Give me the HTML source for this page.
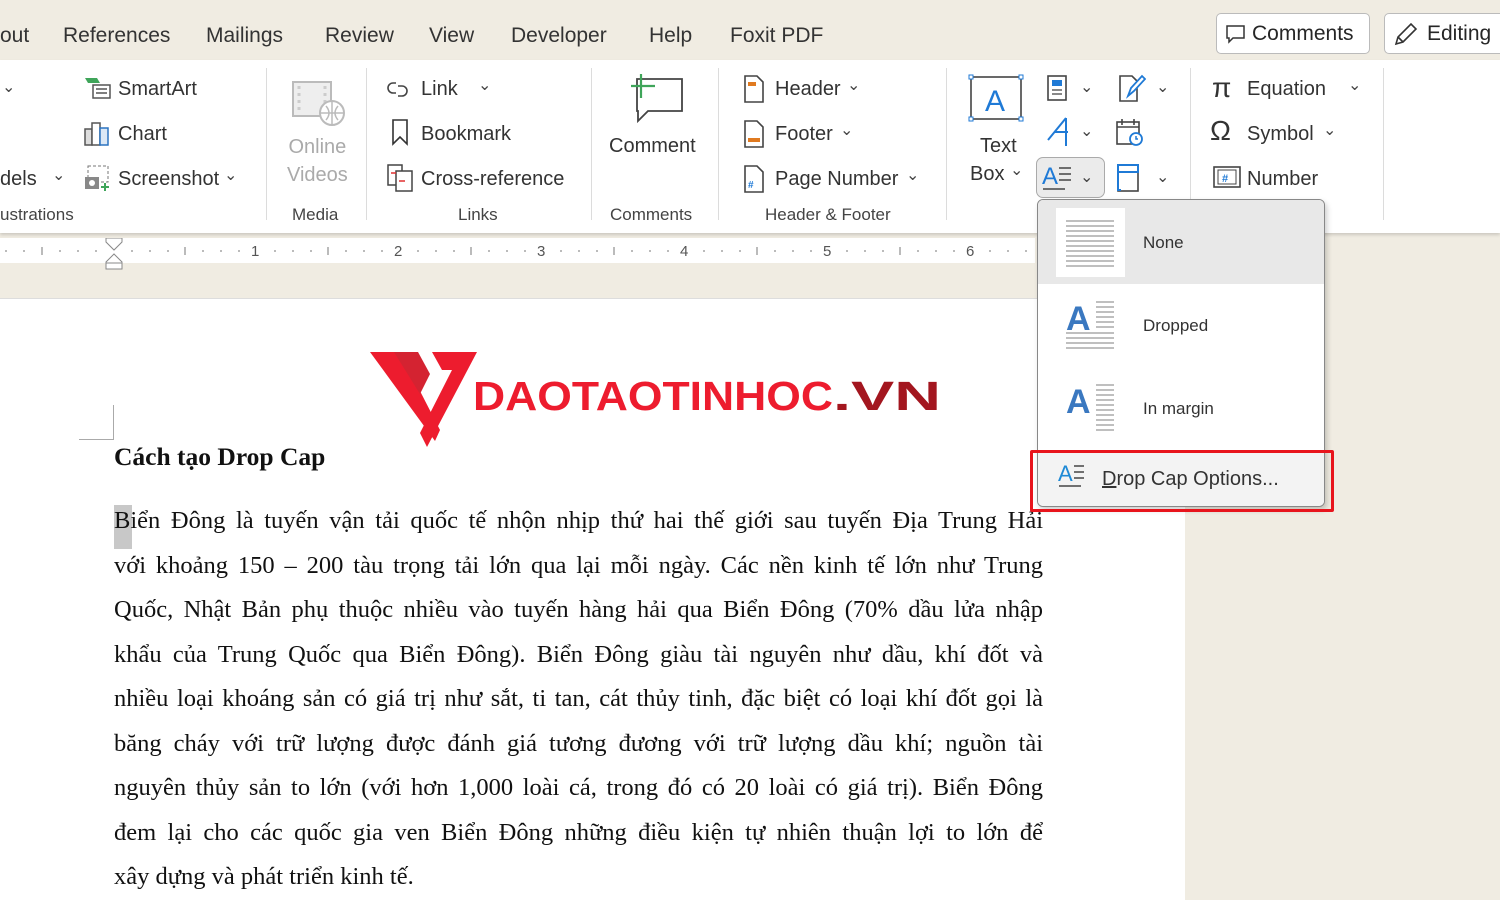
<!DOCTYPE html>
<html><head><meta charset="utf-8"><style>
*{margin:0;padding:0;box-sizing:border-box}
body{width:1500px;height:900px;overflow:hidden;position:relative;background:#f0ece2;font-family:"Liberation Sans",sans-serif;color:#262626}
.a{position:absolute;white-space:nowrap}
.tab{top:24px;font-size:21px;color:#333}
.rb{font-size:20px;color:#333;margin-top:2px}
.grp{font-size:17px;color:#444;top:205px}
.sep{position:absolute;top:68px;width:1px;height:152px;background:#dcdcdc}
.chev{font-size:16px;color:#444;margin-top:1px}
.doc{font-family:"Liberation Serif",serif;font-size:24.5px;color:#111}
.p{position:absolute;left:114px;width:929px;text-align:justify;text-align-last:justify;white-space:nowrap}
</style></head><body>
<div class="a tab" style="left:0">out</div>
<div class="a tab" style="left:63px">References</div>
<div class="a tab" style="left:206px">Mailings</div>
<div class="a tab" style="left:325px">Review</div>
<div class="a tab" style="left:429px">View</div>
<div class="a tab" style="left:511px">Developer</div>
<div class="a tab" style="left:649px">Help</div>
<div class="a tab" style="left:730px">Foxit PDF</div>
<div class="a" style="left:1216px;top:13px;width:154px;height:41px;border:1px solid #bbb;border-radius:5px;background:#fff;font-size:21px;padding:8px 0 0 35px">Comments</div>
<svg class="a" style="left:1225px;top:24px" width="22" height="22"><path d="M2 2h17v12H8l-4 4v-4H2z" fill="none" stroke="#333" stroke-width="1.5"/></svg>
<div class="a" style="left:1384px;top:13px;width:130px;height:41px;border:1px solid #bbb;border-radius:5px;background:#fff;font-size:21px;padding:8px 0 0 42px">Editing</div>
<svg class="a" style="left:1392px;top:20px" width="28" height="28"><path d="M4 24l2-7L19 4l5 5L11 22z M6 17l5 5" fill="none" stroke="#333" stroke-width="1.6"/></svg>
<div class="a" style="left:0;top:60px;width:1500px;height:173px;background:#fff;box-shadow:0 2px 3px rgba(0,0,0,.15)"></div>
<div class="sep" style="left:266px"></div><div class="sep" style="left:366px"></div><div class="sep" style="left:591px"></div><div class="sep" style="left:718px"></div><div class="sep" style="left:946px"></div><div class="sep" style="left:1190px"></div><div class="sep" style="left:1383px"></div>
<div class="a chev" style="left:2px;top:76px">⌄</div>
<div class="a rb" style="left:0;top:166px">dels</div><div class="a chev" style="left:52px;top:164px">⌄</div>
<div class="a grp" style="left:0">ustrations</div>
<svg class="a" style="left:84px;top:76px" width="28" height="24"><path d="M1 2h12l3 5H4z" fill="#3fa55a"/><rect x="9" y="9" width="17" height="13" fill="#fff" stroke="#555" stroke-width="1.5"/><path d="M12 13h11M12 17h11" stroke="#555" stroke-width="1.5"/></svg>
<div class="a rb" style="left:118px;top:76px">SmartArt</div>
<svg class="a" style="left:84px;top:119px" width="28" height="28"><rect x="1" y="10" width="7" height="16" fill="#ddd" stroke="#555" stroke-width="1.5"/><rect x="8" y="4" width="8" height="22" fill="#fff" stroke="#555" stroke-width="1.5"/><rect x="16" y="9" width="8" height="17" fill="#dbe8f6" stroke="#2b73c0" stroke-width="1.5"/></svg>
<div class="a rb" style="left:118px;top:121px">Chart</div>
<svg class="a" style="left:84px;top:164px" width="28" height="28"><rect x="4" y="2" width="20" height="16" fill="none" stroke="#777" stroke-dasharray="3 2"/><rect x="1" y="13" width="14" height="12" fill="#888"/><circle cx="8" cy="19" r="3" fill="#fff"/><path d="M21 19v8M17 23h8" stroke="#3fa55a" stroke-width="2"/></svg>
<div class="a rb" style="left:118px;top:166px">Screenshot</div><div class="a chev" style="left:224px;top:164px">⌄</div>
<svg class="a" style="left:290px;top:80px" width="56" height="48"><rect x="3" y="2" width="38" height="34" fill="#eee" stroke="#bbb" stroke-width="2"/><path d="M9 6v26M35 6v26" stroke="#ccc" stroke-width="3" stroke-dasharray="3 4"/><circle cx="42" cy="33" r="12" fill="#fff" stroke="#bbb" stroke-width="2"/><path d="M30 33h24M42 21v24M36 26q6 7 0 14M48 26q-6 7 0 14" fill="none" stroke="#bbb" stroke-width="1.5"/></svg>
<div class="a rb" style="left:287px;top:131px;color:#aaa;line-height:28px;text-align:center">Online<br>Videos</div>
<div class="a grp" style="left:292px">Media</div>
<svg class="a" style="left:386px;top:78px" width="30" height="22"><path d="M10 5h-3a5 5 0 0 0 0 10h3M12 8h4a5 5 0 0 1 0 10h-4" fill="none" stroke="#444" stroke-width="1.6"/></svg>
<div class="a rb" style="left:421px;top:76px">Link</div><div class="a chev" style="left:478px;top:74px">⌄</div>
<svg class="a" style="left:390px;top:118px" width="22" height="30"><path d="M3 2h14v24l-7-7-7 7z" fill="none" stroke="#333" stroke-width="1.6"/></svg>
<div class="a rb" style="left:421px;top:121px">Bookmark</div>
<svg class="a" style="left:386px;top:163px" width="30" height="30"><rect x="2" y="2" width="14" height="20" fill="#fff" stroke="#444" stroke-width="1.5"/><rect x="10" y="8" width="16" height="20" fill="#fff" stroke="#444" stroke-width="1.5"/><path d="M13 18h6M5 10h5" stroke="#e03030" stroke-width="1.6"/></svg>
<div class="a rb" style="left:421px;top:166px">Cross-reference</div>
<div class="a grp" style="left:458px">Links</div>
<svg class="a" style="left:624px;top:70px" width="60" height="56"><path d="M13 9h45v32H24l-10 10V41h-1z" fill="#fff" stroke="#444" stroke-width="1.8"/><path d="M17 4v24M7 16h24" stroke="#3fa55a" stroke-width="2.2"/></svg>
<div class="a rb" style="left:609px;top:133px">Comment</div>
<div class="a grp" style="left:610px">Comments</div>
<svg class="a" style="left:743px;top:74px" width="22" height="30"><path d="M2 2h12l6 6v20H2z" fill="#fff" stroke="#444" stroke-width="1.6"/><rect x="5" y="8" width="8" height="4" fill="#e07a20"/></svg>
<div class="a rb" style="left:775px;top:76px">Header</div><div class="a chev" style="left:847px;top:74px">⌄</div>
<svg class="a" style="left:743px;top:119px" width="22" height="30"><path d="M2 2h12l6 6v20H2z" fill="#fff" stroke="#444" stroke-width="1.6"/><rect x="5" y="19" width="12" height="4" fill="#e07a20"/></svg>
<div class="a rb" style="left:775px;top:121px">Footer</div><div class="a chev" style="left:840px;top:119px">⌄</div>
<svg class="a" style="left:743px;top:164px" width="22" height="30"><path d="M2 2h12l6 6v20H2z" fill="#fff" stroke="#444" stroke-width="1.6"/><text x="5" y="24" font-size="10" fill="#1f7ad6" font-weight="bold">#</text></svg>
<div class="a rb" style="left:775px;top:166px">Page Number</div><div class="a chev" style="left:906px;top:164px">⌄</div>
<div class="a grp" style="left:765px">Header &amp; Footer</div>
<svg class="a" style="left:968px;top:74px" width="58" height="50"><rect x="3" y="3" width="50" height="42" fill="none" stroke="#444" stroke-width="1.6"/><g fill="#fff" stroke="#1f7ad6"><rect x="1" y="1" width="4" height="4"/><rect x="51" y="1" width="4" height="4"/><rect x="1" y="43" width="4" height="4"/><rect x="51" y="43" width="4" height="4"/></g><text x="17" y="37" font-size="30" fill="#1f7ad6" font-family="Liberation Sans">A</text></svg>
<div class="a rb" style="left:980px;top:133px">Text</div>
<div class="a rb" style="left:970px;top:161px">Box</div><div class="a chev" style="left:1010px;top:159px">⌄</div>
<svg class="a" style="left:1046px;top:74px" width="24" height="28"><rect x="2" y="2" width="18" height="24" fill="#fff" stroke="#444" stroke-width="1.6"/><rect x="6" y="6" width="10" height="6" fill="#1f7ad6"/><path d="M6 16h10M6 20h10" stroke="#888" stroke-width="2"/></svg>
<div class="a chev" style="left:1080px;top:76px">⌄</div>
<svg class="a" style="left:1044px;top:116px" width="28" height="32"><path d="M22 2L4 24M22 2v28M10 16h14" fill="none" stroke="#1f7ad6" stroke-width="2"/></svg>
<div class="a chev" style="left:1080px;top:120px">⌄</div>
<svg class="a" style="left:1118px;top:72px" width="28" height="32"><path d="M2 4h12l5 5v20H2z" fill="#fff" stroke="#444" stroke-width="1.6"/><path d="M10 24l3-8 11-12 3 3-11 12z" fill="#fff" stroke="#1f7ad6" stroke-width="1.8"/></svg>
<div class="a chev" style="left:1156px;top:76px">⌄</div>
<svg class="a" style="left:1114px;top:118px" width="32" height="30"><rect x="3" y="4" width="22" height="22" fill="#fff" stroke="#444" stroke-width="1.6"/><path d="M3 9h22M8 1v6M20 1v6" stroke="#444" stroke-width="1.6"/><circle cx="22" cy="21" r="6" fill="#fff" stroke="#1f7ad6" stroke-width="1.8"/><path d="M22 18v3h2" stroke="#1f7ad6" stroke-width="1.5" fill="none"/></svg>
<div class="a" style="left:1036px;top:157px;width:69px;height:41px;border:1px solid #aaa;border-radius:7px;background:#ebebeb"></div>
<svg class="a" style="left:1042px;top:162px" width="34" height="30"><text x="0" y="22" font-size="24" fill="#1f7ad6" font-family="Liberation Sans">A</text><path d="M17 6h12M17 12h12M17 18h12" stroke="#444" stroke-width="1.6"/><path d="M1 27h22" stroke="#444" stroke-width="1.6"/></svg>
<div class="a chev" style="left:1080px;top:166px">⌄</div>
<svg class="a" style="left:1114px;top:162px" width="28" height="32"><rect x="4" y="3" width="20" height="26" fill="#fff" stroke="#444" stroke-width="1.6"/><rect x="4" y="3" width="20" height="7" fill="#fff" stroke="#1f7ad6" stroke-width="2"/><path d="M4 10v18h3" stroke="#1f7ad6" stroke-width="2" fill="none"/></svg>
<div class="a chev" style="left:1156px;top:166px">⌄</div>
<div class="a" style="left:1212px;top:72px;font-size:28px;color:#333">π</div>
<div class="a rb" style="left:1247px;top:76px">Equation</div><div class="a chev" style="left:1348px;top:74px">⌄</div>
<div class="a" style="left:1210px;top:115px;font-size:28px;color:#333">Ω</div>
<div class="a rb" style="left:1247px;top:121px">Symbol</div><div class="a chev" style="left:1323px;top:119px">⌄</div>
<svg class="a" style="left:1212px;top:165px" width="30" height="26"><rect x="2" y="2" width="26" height="20" fill="#fff" stroke="#444" stroke-width="1.6"/><rect x="6" y="5" width="18" height="14" fill="#fff" stroke="#444"/><text x="10" y="17" font-size="11" fill="#1f7ad6" font-weight="bold">#</text></svg>
<div class="a rb" style="left:1247px;top:166px">Number</div>
<div class="a" style="left:0;top:238px;width:1035px;height:25px;background:#fff"></div>
<svg class="a" style="left:0;top:238px" width="1040" height="34">
<g stroke="#777" stroke-width="1">
<path d="M6 12v2M24 12v2M42 9v8M60 12v2M78 12v2M96 12v2"/>
<path d="M132 12v2M150 12v2M168 12v2M185 9v8M203 12v2M221 12v2M239 12v2"/>
<path d="M275 12v2M293 12v2M311 12v2M328 9v8M346 12v2M364 12v2M382 12v2"/>
<path d="M418 12v2M436 12v2M454 12v2M471 9v8M489 12v2M507 12v2M525 12v2"/>
<path d="M561 12v2M579 12v2M597 12v2M614 9v8M632 12v2M650 12v2M668 12v2"/>
<path d="M704 12v2M722 12v2M740 12v2M757 9v8M775 12v2M793 12v2M811 12v2"/>
<path d="M847 12v2M865 12v2M883 12v2M900 9v8M918 12v2M936 12v2M954 12v2"/>
<path d="M990 12v2M1008 12v2M1026 12v2"/>
</g>
<g font-size="15" fill="#555" font-family="Liberation Sans"><text x="251" y="18">1</text><text x="394" y="18">2</text><text x="537" y="18">3</text><text x="680" y="18">4</text><text x="823" y="18">5</text><text x="966" y="18">6</text></g>
<path d="M106 0h16v4l-8 8-8-8z M106 24l8-8 8 8v7h-16z M106 25h16" fill="#fff" stroke="#888"/>
</svg>
<div class="a" style="left:0;top:298px;width:1185px;height:602px;background:#fff;border-top:1px solid #ddd"></div>
<div class="a" style="left:79px;top:405px;width:35px;height:35px;border-right:1px solid #aaa;border-bottom:1px solid #aaa"></div>
<svg class="a" style="left:370px;top:352px" width="580" height="95">
<path d="M0 0h30l40 78-5 11z" fill="#ed1c2e"/><path d="M24 0h24l12 22-10 20z" fill="#d42331"/><path d="M62 0h45L57 95l-7-14 32-63h-10z" fill="#ed1c2e"/>
<text x="103" y="58" font-family="Liberation Sans" font-weight="bold" font-size="41" fill="#ed1c2e" textLength="360" lengthAdjust="spacingAndGlyphs">DAOTAOTINHOC</text>
<text x="463" y="58" font-family="Liberation Sans" font-weight="bold" font-size="41" fill="#a3161f" textLength="108" lengthAdjust="spacingAndGlyphs">.VN</text>
</svg>
<div class="a doc" style="left:114px;top:442px;font-weight:bold;font-size:25.5px">Cách tạo Drop Cap</div>
<div class="a" style="left:114px;top:505px;width:18px;height:44px;background:#c8c8c8"></div>
<div class="doc">
<div class="p" style="top:507px">Biển Đông là tuyến vận tải quốc tế nhộn nhịp thứ hai thế giới sau tuyến Địa Trung Hải</div>
<div class="p" style="top:552px">với khoảng 150 – 200 tàu trọng tải lớn qua lại mỗi ngày. Các nền kinh tế lớn như Trung</div>
<div class="p" style="top:596px">Quốc, Nhật Bản phụ thuộc nhiều vào tuyến hàng hải qua Biển Đông (70% dầu lửa nhập</div>
<div class="p" style="top:641px">khẩu của Trung Quốc qua Biển Đông). Biển Đông giàu tài nguyên như dầu, khí đốt và</div>
<div class="p" style="top:685px">nhiều loại khoáng sản có giá trị như sắt, ti tan, cát thủy tinh, đặc biệt có loại khí đốt gọi là</div>
<div class="p" style="top:730px">băng cháy với trữ lượng được đánh giá tương đương với trữ lượng dầu khí; nguồn tài</div>
<div class="p" style="top:774px">nguyên thủy sản to lớn (với hơn 1,000 loài cá, trong đó có 20 loài có giá trị). Biển Đông</div>
<div class="p" style="top:819px">đem lại cho các quốc gia ven Biển Đông những điều kiện tự nhiên  thuận lợi to lớn để</div>
<div class="a" style="left:114px;top:863px">xây dựng và phát triển kinh tế.</div>
</div>
<div class="a" style="left:1037px;top:199px;width:288px;height:308px;background:#fff;border:1.5px solid #888;border-radius:6px;box-shadow:2px 3px 6px rgba(0,0,0,.2);overflow:hidden">
<div style="position:absolute;left:0;top:0;width:288px;height:84px;background:#e8e8e8"></div>
<div style="position:absolute;left:18px;top:8px;width:69px;height:69px;background:#fff"></div>
<svg style="position:absolute;left:28px;top:20px" width="50" height="50"><g stroke="#aaa" stroke-width="1.5"><path d="M0 1h48M0 6h48M0 11h48M0 16h48M0 21h48M0 26h48M0 31h48M0 36h48M0 41h48M0 46h48"/></g></svg>
<div style="position:absolute;left:105px;top:33px;font-size:17px;color:#333">None</div>
<svg style="position:absolute;left:28px;top:100px" width="50" height="52"><text x="0" y="30" font-size="34" font-weight="bold" fill="#3a78c0" font-family="Liberation Sans">A</text><g stroke="#aaa" stroke-width="1.5"><path d="M30 2h18M30 7h18M30 12h18M30 17h18M30 22h18M30 27h18M0 33h48M0 38h48M0 43h48M0 48h48"/></g></svg>
<div style="position:absolute;left:105px;top:116px;font-size:17px;color:#333">Dropped</div>
<svg style="position:absolute;left:28px;top:183px" width="50" height="52"><text x="0" y="30" font-size="34" font-weight="bold" fill="#3a78c0" font-family="Liberation Sans">A</text><g stroke="#aaa" stroke-width="1.5"><path d="M30 2h18M30 7h18M30 12h18M30 17h18M30 22h18M30 27h18M30 32h18M30 37h18M30 42h18M30 47h18"/></g></svg>
<div style="position:absolute;left:105px;top:199px;font-size:17px;color:#333">In margin</div>
<div style="position:absolute;left:0;top:250px;width:288px;height:60px;background:#f3f3f3;border-top:1px solid #ddd"></div>
<svg style="position:absolute;left:20px;top:262px" width="32" height="28"><text x="0" y="19" font-size="22" fill="#1f8ad6" font-family="Liberation Sans">A</text><path d="M16 4h10M16 10h10M16 16h10M1 24h22" stroke="#444" stroke-width="1.5"/></svg>
<div style="position:absolute;left:64px;top:268px;font-size:20px;color:#333"><u>D</u>rop Cap Options...</div>
</div>
<div class="a" style="left:1030px;top:450px;width:304px;height:62px;border:3px solid #e8141c;border-radius:2px"></div>
</body></html>
